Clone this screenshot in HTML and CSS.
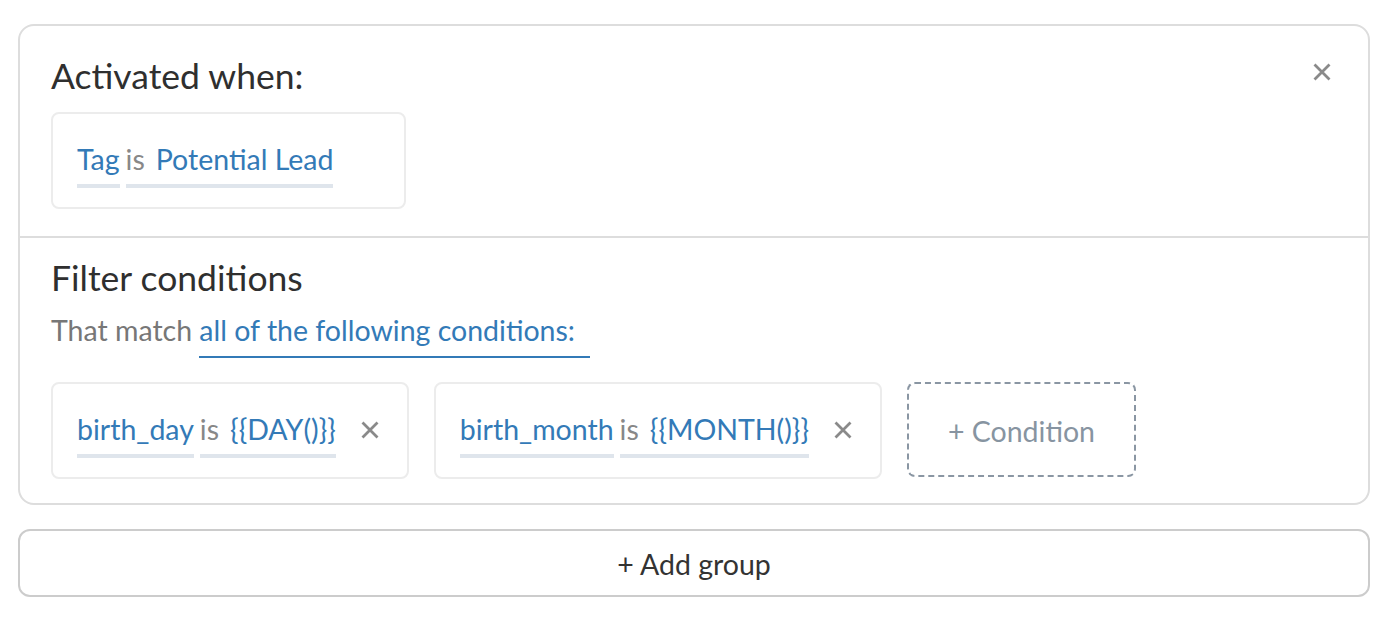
FILE: index.html
```html
<!DOCTYPE html>
<html lang="en">
<head>
<meta charset="utf-8">
<title>Automation rule</title>
<link rel="stylesheet" href="styles.css">
</head>
<body>
<div class="page">
  <div class="group">
    <section class="section trigger">
      <div class="section-head">
        <h2 class="title">Activated when:</h2>
        <button class="close-group" aria-label="Remove group">
          <svg viewBox="0 0 18 18" width="18" height="18"><path d="M1.5 1.5L16.5 16.5M16.5 1.5L1.5 16.5"/></svg>
        </button>
      </div>
      <div class="rules">
        <div class="rule">
          <span class="field">Tag</span>
          <span class="field cmp"><span class="op">is</span><span class="val">Potential Lead</span></span>
          <span class="remove hidden"><svg viewBox="0 0 18 18" width="18" height="18"><path d="M1.5 1.5L16.5 16.5M16.5 1.5L1.5 16.5"/></svg></span>
        </div>
      </div>
    </section>
    <section class="section filters">
      <h2 class="title">Filter conditions</h2>
      <p class="match">That match <span class="match-select">all of the following conditions:</span></p>
      <div class="rules">
        <div class="rule">
          <span class="field">birth_day</span>
          <span class="field cmp"><span class="op">is</span><span class="val">{{DAY()}}</span></span>
          <button class="remove" aria-label="Remove condition"><svg viewBox="0 0 18 18" width="18" height="18"><path d="M1.5 1.5L16.5 16.5M16.5 1.5L1.5 16.5"/></svg></button>
        </div>
        <div class="rule">
          <span class="field">birth_month</span>
          <span class="field cmp"><span class="op">is</span><span class="val">{{MONTH()}}</span></span>
          <button class="remove" aria-label="Remove condition"><svg viewBox="0 0 18 18" width="18" height="18"><path d="M1.5 1.5L16.5 16.5M16.5 1.5L1.5 16.5"/></svg></button>
        </div>
        <button class="add-condition">+ Condition</button>
      </div>
    </section>
  </div>
  <button class="add-group">+ Add group</button>
</div>
</body>
</html>
```
FILE: styles.css
```css
* { box-sizing: border-box; }
html, body { margin: 0; background: #fff; }
body {
  font-family: "Lato", "Liberation Sans", sans-serif;
  color: #333;
}
button { font-family: inherit; }
.page {
  padding: 24px 23px 26px 18px;
}
.group {
  border: 2px solid #ddd;
  border-radius: 16px;
}
.section { padding: 0 31px; }
.trigger { padding-top: 28px; padding-bottom: 27px; }
.filters {
  border-top: 2px solid #ddd;
  padding-top: 18px;
  padding-bottom: 24px;
}
.section-head {
  display: flex;
  justify-content: space-between;
  align-items: flex-start;
}
.title {
  margin: 0;
  font-size: 35.5px;
  line-height: 44px;
  font-weight: 400;
  color: #2f2f2f;
}
.close-group {
  border: 0;
  background: none;
  padding: 0;
  margin: 9px 6px 0 0;
  width: 18px;
  height: 18px;
  display: flex;
}
svg path { stroke: #8a8a8a; stroke-width: 2.8; fill: none; }
.trigger .rules { margin-top: 14px; }
.rules {
  display: flex;
  align-items: flex-start;
  gap: 25px;
}
.rule {
  display: flex;
  align-items: flex-start;
  border: 2px solid #ececec;
  border-radius: 8px;
  padding: 27px 28px 19px 24px;
  font-size: 28.5px;
  line-height: 36px;
}
.field {
  display: inline-block;
  color: #337ab7;
  padding-bottom: 7px;
  border-bottom: 4px solid #dfe5ec;
  white-space: nowrap;
}
.cmp { margin-left: 6px; }
.op { color: #888; margin-right: 11px; }
.remove {
  border: 0;
  background: none;
  padding: 0;
  margin: 10px 0 0 25px;
  width: 18px;
  height: 18px;
  display: flex;
}
.remove.hidden { visibility: hidden; }
.match {
  margin: 12px 0 0;
  font-size: 28.5px;
  line-height: 36px;
  color: #777;
}
.match-select {
  display: inline-block;
  color: #337ab7;
  padding-right: 15px;
  padding-bottom: 8px;
  border-bottom: 2px solid #337ab7;
}
.filters .rules { margin-top: 24px; }
.add-condition {
  width: 229px;
  height: 95px;
  border: 2px dashed #8a96a3;
  border-radius: 8px;
  background: #fff;
  color: #8794a1;
  font-size: 28.5px;
  padding-top: 3px;
}
.add-group {
  display: block;
  width: 100%;
  height: 68px;
  margin-top: 24px;
  border: 2px solid #ccc;
  border-radius: 12px;
  background: #fff;
  color: #333;
  font-size: 28.5px;
  padding-top: 3px;
}
```
